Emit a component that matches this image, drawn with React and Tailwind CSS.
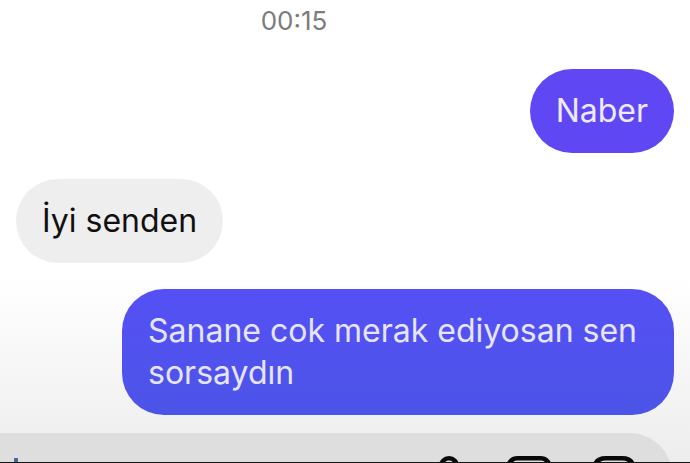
const messages = [
  { id: 1, mine: true, text: "Naber", tone: "bg-[#5f47f3] text-[#eeeafd]" },
  { id: 2, mine: false, text: "İyi senden", tone: "bg-[#eeeeee] text-[#101010]" },
  {
    id: 3,
    mine: true,
    text: "Sanane cok merak ediyosan sen sorsaydın",
    tone: "bg-linear-to-b from-[#5550f5] to-[#4c54e7] text-[#e6e5fd]",
  },
];

function Message({ mine, text, tone }) {
  return (
    <li className={mine ? "flex justify-end" : "flex justify-start"}>
      <p className={`max-w-[552px] rounded-[42px] px-[26px] py-[21px] text-[32px] leading-[42px] ${tone}`}>
        {text}
      </p>
    </li>
  );
}

function MicIcon() {
  return (
    <svg width="34" height="38" viewBox="0 0 34 38" fill="none" stroke="#090909" strokeWidth="4.5">
      <rect x="9" y="2.3" width="16" height="23" rx="8" />
      <path d="M3 18c0 18 28 18 28 0M17 32v6" strokeLinecap="round" />
    </svg>
  );
}

function GalleryIcon() {
  return (
    <svg width="46" height="38" viewBox="0 0 46 38" fill="none" stroke="#090909" strokeWidth="4.5">
      <rect x="2.3" y="2.3" width="41.4" height="33.4" rx="9" />
      <circle cx="14" cy="14" r="3" />
      <path d="M4 32l12-10 8 6 10-12 10 12" strokeLinejoin="round" />
    </svg>
  );
}

function StickerIcon() {
  return (
    <svg width="44" height="38" viewBox="0 0 44 38" fill="none" stroke="#090909" strokeWidth="4.5">
      <path d="M14 2.3h16q11.7 0 11.7 12v8L28 35.7H14Q2.3 35.7 2.3 24V14Q2.3 2.3 14 2.3z" />
      <path d="M42 22h-6q-8 0-8 8v6" />
    </svg>
  );
}

function Composer() {
  return (
    <div className="h-[30px] overflow-hidden border-b border-[#151515]">
      <form className="mr-[18px] flex h-[84px] items-center rounded-r-[42px] bg-[#dedede] pr-[36px] pl-[14px]">
        <span aria-hidden="true" className="h-[34px] w-1 bg-[#4868ac]" />
        <input
          type="text"
          aria-label="Mesaj"
          className="h-[42px] min-w-0 flex-1 bg-transparent px-2 text-[32px] outline-none"
        />
        <div className="flex items-center gap-10">
          <button type="button" aria-label="Sesli mesaj">
            <MicIcon />
          </button>
          <button type="button" aria-label="Galeri">
            <GalleryIcon />
          </button>
          <button type="button" aria-label="Çıkartma">
            <StickerIcon />
          </button>
        </div>
      </form>
    </div>
  );
}

export default function App() {
  return (
    <main className="min-h-screen bg-linear-to-b from-white from-60% to-[#ededed] font-['Inter',sans-serif]">
      <time className="block pt-[5px] pr-[102px] text-center text-[26px] leading-8 text-[#7c7c7c]">00:15</time>
      <ul className="flex flex-col gap-[26px] px-4 pt-8 pb-[18px]">
        {messages.map((message) => (
          <Message key={message.id} {...message} />
        ))}
      </ul>
      <Composer />
    </main>
  );
}
